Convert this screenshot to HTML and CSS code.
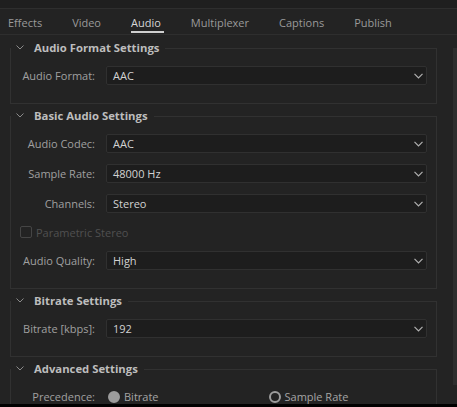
FILE: index.html
```html
<!DOCTYPE html>
<html>
<head>
<meta charset="utf-8">
<link rel="stylesheet" href="styles.css">
</head>
<body>
<div class="app">
  <div class="topstrip"></div>
  <nav class="tabs">
    <span class="tab">Effects</span>
    <span class="tab">Video</span>
    <span class="tab active">Audio</span>
    <span class="tab">Multiplexer</span>
    <span class="tab">Captions</span>
    <span class="tab">Publish</span>
  </nav>
  <div class="main">
    <div class="panel">
      <fieldset class="section">
        <legend><svg class="chev" width="8" height="5" viewBox="0 0 8 5"><polyline points="0.5,0.5 4,4 7.5,0.5" fill="none" stroke="#8a8a8a" stroke-width="1"/></svg>Audio Format Settings</legend>
        <div class="rows">
          <div class="row"><label>Audio Format:</label><div class="select"><span>AAC</span><svg width="9" height="6" viewBox="0 0 9 6"><polyline points="0.5,0.8 4.5,4.8 8.5,0.8" fill="none" stroke="#b0b0b0" stroke-width="1.2"/></svg></div></div>
        </div>
      </fieldset>
      <fieldset class="section">
        <legend><svg class="chev" width="8" height="5" viewBox="0 0 8 5"><polyline points="0.5,0.5 4,4 7.5,0.5" fill="none" stroke="#8a8a8a" stroke-width="1"/></svg>Basic Audio Settings</legend>
        <div class="rows">
          <div class="row"><label>Audio Codec:</label><div class="select"><span>AAC</span><svg width="9" height="6" viewBox="0 0 9 6"><polyline points="0.5,0.8 4.5,4.8 8.5,0.8" fill="none" stroke="#b0b0b0" stroke-width="1.2"/></svg></div></div>
          <div class="row"><label>Sample Rate:</label><div class="select"><span>48000 Hz</span><svg width="9" height="6" viewBox="0 0 9 6"><polyline points="0.5,0.8 4.5,4.8 8.5,0.8" fill="none" stroke="#b0b0b0" stroke-width="1.2"/></svg></div></div>
          <div class="row"><label>Channels:</label><div class="select"><span>Stereo</span><svg width="9" height="6" viewBox="0 0 9 6"><polyline points="0.5,0.8 4.5,4.8 8.5,0.8" fill="none" stroke="#b0b0b0" stroke-width="1.2"/></svg></div></div>
          <div class="check"><span class="box"></span><span>Parametric Stereo</span></div>
          <div class="row"><label>Audio Quality:</label><div class="select"><span>High</span><svg width="9" height="6" viewBox="0 0 9 6"><polyline points="0.5,0.8 4.5,4.8 8.5,0.8" fill="none" stroke="#b0b0b0" stroke-width="1.2"/></svg></div></div>
        </div>
      </fieldset>
      <fieldset class="section">
        <legend><svg class="chev" width="8" height="5" viewBox="0 0 8 5"><polyline points="0.5,0.5 4,4 7.5,0.5" fill="none" stroke="#8a8a8a" stroke-width="1"/></svg>Bitrate Settings</legend>
        <div class="rows">
          <div class="row"><label>Bitrate [kbps]:</label><div class="select"><span>192</span><svg width="9" height="6" viewBox="0 0 9 6"><polyline points="0.5,0.8 4.5,4.8 8.5,0.8" fill="none" stroke="#b0b0b0" stroke-width="1.2"/></svg></div></div>
        </div>
      </fieldset>
      <fieldset class="section">
        <legend><svg class="chev" width="8" height="5" viewBox="0 0 8 5"><polyline points="0.5,0.5 4,4 7.5,0.5" fill="none" stroke="#8a8a8a" stroke-width="1"/></svg>Advanced Settings</legend>
        <div class="rows">
          <div class="row"><label>Precedence:</label>
            <div class="radios">
              <div class="radio"><span class="dot filled"></span><span>Bitrate</span></div>
              <div class="radio"><span class="dot"></span><span>Sample Rate</span></div>
            </div>
          </div>
        </div>
      </fieldset>
    </div>
    <div class="scrolltrack"><div class="thumb"></div></div>
  </div>
  <div class="bottom"></div>
</div>
</body>
</html>
```
FILE: styles.css
```css
html, body {
  margin: 0;
  padding: 0;
  background: #232323;
}
body {
  font-family: "Open Sans", "Noto Sans", sans-serif;
  font-size: 11px;
  color: #a0a0a0;
}
.app {
  width: 457px;
  height: 407px;
  display: flex;
  flex-direction: column;
  overflow: hidden;
  background: #232323;
}
.topstrip {
  height: 8px;
  background: #1f1f1f;
  border-bottom: 1px solid #2e2e2e;
  flex: none;
}
.tabs {
  flex: none;
  height: 25px;
  display: flex;
  gap: 30px;
  padding-left: 8px;
  border-bottom: 1px solid #2e2e2e;
  font-size: 11px;
  color: #9a9a9a;
}
.tab {
  position: relative;
  line-height: 27px;
  white-space: nowrap;
}
.tab.active {
  color: #d6d6d6;
}
.tab.active::after {
  content: "";
  position: absolute;
  left: 0;
  right: -3px;
  bottom: 1px;
  height: 2px;
  background: #cfcfcf;
}
.main {
  flex: 1;
  display: flex;
  min-height: 0;
  overflow: hidden;
}
.panel {
  width: 427px;
  margin-left: 10px;
  padding-top: 5px;
  flex: none;
}
.scrolltrack {
  margin-left: 16px;
  width: 4px;
  padding-top: 13px;
  flex: none;
}
.thumb {
  height: 337px;
  background: #2e2e2e;
}
.bottom {
  flex: none;
  height: 3px;
  background: #000;
}
.section {
  margin: 0 0 4px 0;
  border: 1px solid #313131;
  padding: 10px 9px 18px 0;
  min-width: 0;
}
.section legend {
  padding: 0 6px 0 5px;
  margin-left: 0;
  font-size: 11.3px;
  font-weight: bold;
  line-height: 16px;
  color: #bdbdbd;
  display: flex;
  align-items: center;
}
.chev {
  margin-right: 10px;
  margin-top: -2px;
}
.rows {
  display: flex;
  flex-direction: column;
  gap: 11px;
}
.row {
  display: flex;
  align-items: center;
  height: 19px;
}
.row label {
  width: 84px;
  padding-right: 11px;
  text-align: right;
  flex: none;
  white-space: nowrap;
}
.select {
  flex: 1;
  height: 17px;
  background: #1d1d1d;
  border: 1px solid #303030;
  border-radius: 2px;
  display: flex;
  align-items: center;
  justify-content: space-between;
  padding: 0 3px 0 6px;
  color: #d2d2d2;
}
.check {
  height: 16px;
  display: flex;
  align-items: center;
  padding-left: 9px;
  color: #505050;
}
.check .box {
  width: 10px;
  height: 10px;
  border: 1px solid #454545;
  border-radius: 2px;
  margin-right: 4px;
}
.radios {
  flex: 1;
  display: grid;
  grid-template-columns: 1fr 1fr;
}
.radio {
  display: flex;
  align-items: center;
  padding-left: 2px;
  color: #a5a5a5;
}
.dot {
  width: 8px;
  height: 8px;
  border: 2px solid #9c9c9c;
  border-radius: 50%;
  margin-right: 4px;
}
.dot.filled {
  background: #9c9c9c;
}
```
